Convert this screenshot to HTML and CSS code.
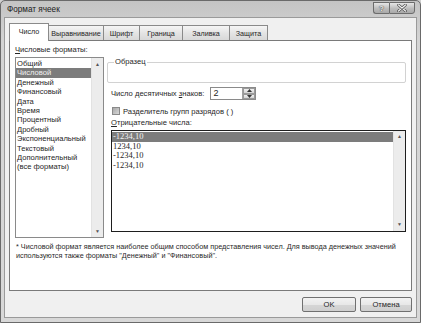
FILE: index.html
```html
<!DOCTYPE html>
<html lang="ru">
<head>
<meta charset="utf-8">
<title>Формат ячеек</title>
<link rel="stylesheet" href="styles.css">
</head>
<body>
<div class="window">
  <div class="titlebar">
    <span class="title">Формат ячеек</span>
    <div class="caption-btns">
      <span class="cbtn help">?</span>
      <span class="cbtn close">
        <svg width="10" height="8" viewBox="0 0 10 8"><path d="M1.5 1 L8.5 7 M8.5 1 L1.5 7" stroke="#4a4a4a" stroke-width="2.6" stroke-linecap="round"/><path d="M1.5 1 L8.5 7 M8.5 1 L1.5 7" stroke="#f4f4f4" stroke-width="1.2" stroke-linecap="round"/></svg>
      </span>
    </div>
  </div>
  <div class="client">
    <div class="tabs">
      <div class="tab active">Число</div>
      <div class="tab t2">Выравнивание</div>
      <div class="tab t3">Шрифт</div>
      <div class="tab t4">Граница</div>
      <div class="tab t5">Заливка</div>
      <div class="tab t6">Защита</div>
    </div>
    <div class="panel">
      <div class="cols">
        <div class="left">
          <div class="label"><u>Ч</u>исловые форматы:</div>
          <div class="listbox">
            <div class="items">
              <div class="item">Общий</div>
              <div class="item sel">Числовой</div>
              <div class="item">Денежный</div>
              <div class="item">Финансовый</div>
              <div class="item">Дата</div>
              <div class="item">Время</div>
              <div class="item">Процентный</div>
              <div class="item">Дробный</div>
              <div class="item">Экспоненциальный</div>
              <div class="item">Текстовый</div>
              <div class="item">Дополнительный</div>
              <div class="item">(все форматы)</div>
            </div>
            <div class="scrollbar">
              <span class="arr">▲</span>
              <span class="arr">▼</span>
            </div>
          </div>
        </div>
        <div class="right">
          <div class="group">
            <span class="legend">Образец</span>
          </div>
          <div class="decimals">
            <span>Число десятичных <u>з</u>наков:</span>
            <div class="spin-input">
              <span class="val">2</span>
              <div class="spinner">
                <span class="sp up"><svg width="5" height="3" viewBox="0 0 5 3"><path d="M0 3 L2.5 0 L5 3Z" fill="#333"/></svg></span>
                <span class="sp down"><svg width="5" height="3" viewBox="0 0 5 3"><path d="M0 0 L2.5 3 L5 0Z" fill="#333"/></svg></span>
              </div>
            </div>
          </div>
          <div class="checkrow">
            <span class="checkbox"></span>
            <span>Разделитель групп разрядов ( )</span>
          </div>
          <div class="label neg-label"><u>О</u>трицательные числа:</div>
          <div class="neglist">
            <div class="items">
              <div class="nitem sel">-1234,10</div>
              <div class="nitem">1234,10</div>
              <div class="nitem">-1234,10</div>
              <div class="nitem">-1234,10</div>
            </div>
            <div class="scrollbar">
              <span class="arr">▲</span>
              <span class="arr">▼</span>
            </div>
          </div>
        </div>
      </div>
      <div class="note">Числовой формат является наиболее общим способом представления чисел. Для вывода денежных значений используются также форматы "Денежный" и "Финансовый".</div>
    </div>
    <div class="buttons">
      <div class="btn ok">OK</div>
      <div class="btn cancel">Отмена</div>
    </div>
  </div>
</div>
</body>
</html>
```
FILE: styles.css
```css
* { box-sizing: border-box; }
html, body { margin: 0; padding: 0; background: #d0d0d0; }
body {
  font-family: "Liberation Sans", Arial, sans-serif;
  font-size: 7.6px;
  color: #262626;
}
.window {
  width: 421px;
  height: 323px;
  background: linear-gradient(#c4c4c4, #d4d4d4 40px, #d8d8d8);
  border: 1px solid #6a6a6a;
  border-radius: 5px 5px 0 0;
  display: flex;
  flex-direction: column;
  padding: 0 3px 4px 3px;
}
.titlebar {
  height: 16px;
  display: flex;
  align-items: flex-start;
  justify-content: space-between;
}
.title {
  font-size: 8.2px;
  color: #202020;
  margin: 4px 0 0 3px;
}
.caption-btns {
  display: flex;
  margin: 1px 2px 0 0;
}
.cbtn {
  height: 12px;
  border: 1px solid #6c6c6c;
  background: linear-gradient(#e6e6e6, #bcbcbc 55%, #a8a8a8);
  display: flex;
  align-items: center;
  justify-content: center;
}
.help {
  width: 16px;
  border-radius: 0 0 0 3px;
  border-right: none;
  font-weight: bold;
  font-size: 8px;
  color: #f4f4f4;
  text-shadow: 0 0 1px #333, 0 0 1px #333;
}
.close {
  width: 26px;
  border-radius: 0 0 3px 0;
}
.client {
  flex: 1;
  background: #f0f0f0;
  border: 1px solid #9a9a9a;
  padding: 4px 4px 0 4px;
}
.tabs {
  display: flex;
  align-items: flex-end;
  height: 18px;
  position: relative;
  z-index: 1;
}
.tab {
  height: 15px;
  border: 1px solid #8a8a8a;
  border-bottom: none;
  margin-left: -1px;
  background: linear-gradient(#f6f6f6, #e4e4e4 50%, #d8d8d8);
  display: flex;
  align-items: center;
  justify-content: center;
  font-size: 7.2px;
  white-space: nowrap;
}
.tab.active {
  height: 18px;
  width: 40px;
  margin-left: 0;
  margin-bottom: -1px;
  background: #fff;
  padding-bottom: 2px;
}
.t2 { width: 56px; }
.t3 { width: 37px; }
.t4 { width: 44px; }
.t5 { width: 48px; }
.t6 { width: 39px; }
.panel {
  width: 403px;
  height: 251px;
  background: #fff;
  border: 1px solid #7a7a7a;
  padding: 4px 4px 0 5px;
}
.cols {
  display: flex;
  gap: 3px;
}
.left {
  width: 89px;
}
.label {
  height: 12px;
  line-height: 10px;
  white-space: nowrap;
}
.listbox {
  height: 181px;
  border: 1px solid #8a8a8a;
  display: flex;
  background: #fff;
}
.items {
  flex: 1;
  padding: 1px 0 0 0;
  min-width: 0;
}
.item {
  height: 9.4px;
  line-height: 9.4px;
  padding-left: 1px;
  white-space: nowrap;
  overflow: hidden;
}
.sel {
  background: #7c7c7c;
  color: #f2f2f2;
}
.scrollbar {
  width: 12px;
  background: #ececec;
  border-left: 1px solid #e2e2e2;
  display: flex;
  flex-direction: column;
  justify-content: space-between;
  align-items: center;
  padding: 3px 0;
}
.arr {
  font-size: 5px;
  color: #555;
  line-height: 6px;
}
.right {
  width: 299px;
}
.group {
  position: relative;
  margin-top: 17px;
  height: 21px;
  border: 1px solid #d2d2d2;
  border-radius: 2px;
}
.legend {
  position: absolute;
  left: 6px;
  top: -6px;
  background: #fff;
  padding: 0 1px;
  line-height: 10px;
}
.decimals {
  display: flex;
  align-items: center;
  margin: 4px 0 0 4px;
  height: 13px;
  gap: 6px;
}
.spin-input {
  width: 46px;
  height: 13px;
  border: 1px solid #8a8a8a;
  display: flex;
  justify-content: space-between;
  background: #fff;
}
.val {
  font-size: 9px;
  line-height: 11px;
  padding-left: 2px;
}
.spinner {
  width: 13px;
  display: flex;
  flex-direction: column;
  border-left: 1px solid #a0a0a0;
}
.sp {
  flex: 1;
  display: flex;
  align-items: center;
  justify-content: center;
  background: linear-gradient(#f2f2f2, #d4d4d4);
  border: 1px solid #9a9a9a;
}
.checkrow {
  display: flex;
  align-items: center;
  gap: 3px;
  margin: 6px 0 0 5px;
  height: 10px;
}
.checkbox {
  width: 8px;
  height: 8px;
  border: 1px solid #8a8a8a;
  background: linear-gradient(135deg, #a8a8a8, #d8d8d8);
}
.neg-label {
  margin: 2px 0 0 4px;
  height: 10px;
}
.neglist {
  margin: 2px 0 0 4px;
  height: 102px;
  border: 1px solid #1e1e1e;
  display: flex;
  font-family: "Liberation Serif", "Times New Roman", serif;
  font-size: 8.5px;
}
.nitem {
  height: 9.5px;
  line-height: 9.5px;
  padding-left: 1px;
}
.note {
  margin-top: 4px;
  padding-left: 1px;
  line-height: 9px;
  font-size: 7.25px;
  color: #2a2a2a;
  width: 393px;
}
.note::before { content: "* "; }
.buttons {
  display: flex;
  justify-content: flex-end;
  gap: 4px;
  margin-top: 6px;
}
.btn {
  height: 15px;
  border: 1px solid #707070;
  border-radius: 2px;
  background: linear-gradient(#f2f2f2, #e8e8e8 50%, #d6d6d6 51%, #cfcfcf);
  display: flex;
  align-items: center;
  justify-content: center;
  font-size: 7.6px;
}
.ok { width: 54px; }
.cancel { width: 52px; }
```
